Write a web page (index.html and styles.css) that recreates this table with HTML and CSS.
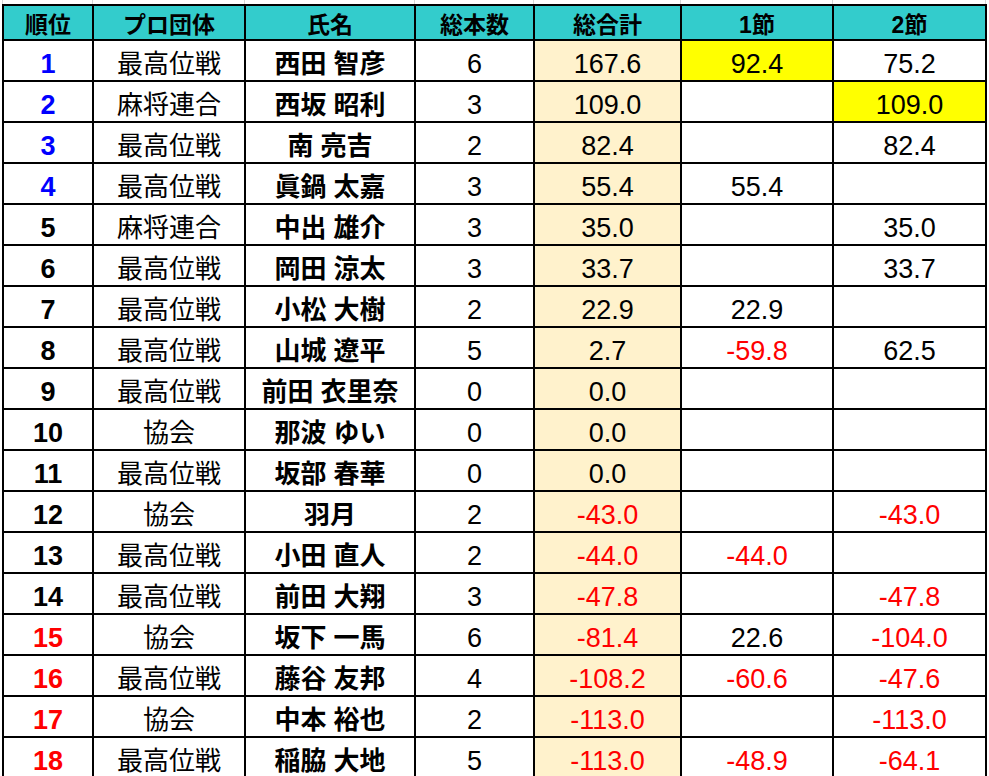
FILE: index.html
```html
<!DOCTYPE html>
<html lang="ja">
<head>
<meta charset="utf-8">
<title>成績表</title>
<link rel="stylesheet" href="styles.css">
</head>
<body>
<div class="grid-strip">
  <span class="gs gs-1"></span><span class="gs gs-2"></span><span class="gs gs-3"></span><span class="gs gs-4"></span><span class="gs gs-5"></span><span class="gs gs-6"></span><span class="gs gs-7"></span>
</div>
<table class="score">
  <thead>
    <tr>
      <th class="c1">順位</th><th class="c2">プロ団体</th><th class="c3">氏名</th><th class="c4">総本数</th><th class="c5">総合計</th><th class="c6">1節</th><th class="c7">2節</th>
    </tr>
  </thead>
  <tbody>
    <tr><td class="rank blue">1</td><td>最高位戦</td><td class="name">西田 智彦</td><td class="num">6</td><td class="num total">167.6</td><td class="num hl">92.4</td><td class="num">75.2</td></tr>
    <tr><td class="rank blue">2</td><td>麻将連合</td><td class="name">西坂 昭利</td><td class="num">3</td><td class="num total">109.0</td><td></td><td class="num hl">109.0</td></tr>
    <tr><td class="rank blue">3</td><td>最高位戦</td><td class="name">南 亮吉</td><td class="num">2</td><td class="num total">82.4</td><td></td><td class="num">82.4</td></tr>
    <tr><td class="rank blue">4</td><td>最高位戦</td><td class="name">眞鍋 太嘉</td><td class="num">3</td><td class="num total">55.4</td><td class="num">55.4</td><td></td></tr>
    <tr><td class="rank">5</td><td>麻将連合</td><td class="name">中出 雄介</td><td class="num">3</td><td class="num total">35.0</td><td></td><td class="num">35.0</td></tr>
    <tr><td class="rank">6</td><td>最高位戦</td><td class="name">岡田 涼太</td><td class="num">3</td><td class="num total">33.7</td><td></td><td class="num">33.7</td></tr>
    <tr><td class="rank">7</td><td>最高位戦</td><td class="name">小松 大樹</td><td class="num">2</td><td class="num total">22.9</td><td class="num">22.9</td><td></td></tr>
    <tr><td class="rank">8</td><td>最高位戦</td><td class="name">山城 遼平</td><td class="num">5</td><td class="num total">2.7</td><td class="num neg">-59.8</td><td class="num">62.5</td></tr>
    <tr><td class="rank">9</td><td>最高位戦</td><td class="name">前田 衣里奈</td><td class="num">0</td><td class="num total">0.0</td><td></td><td></td></tr>
    <tr><td class="rank">10</td><td>協会</td><td class="name">那波 ゆい</td><td class="num">0</td><td class="num total">0.0</td><td></td><td></td></tr>
    <tr><td class="rank">11</td><td>最高位戦</td><td class="name">坂部 春華</td><td class="num">0</td><td class="num total">0.0</td><td></td><td></td></tr>
    <tr><td class="rank">12</td><td>協会</td><td class="name">羽月</td><td class="num">2</td><td class="num total neg">-43.0</td><td></td><td class="num neg">-43.0</td></tr>
    <tr><td class="rank">13</td><td>最高位戦</td><td class="name">小田 直人</td><td class="num">2</td><td class="num total neg">-44.0</td><td class="num neg">-44.0</td><td></td></tr>
    <tr><td class="rank">14</td><td>最高位戦</td><td class="name">前田 大翔</td><td class="num">3</td><td class="num total neg">-47.8</td><td></td><td class="num neg">-47.8</td></tr>
    <tr><td class="rank red">15</td><td>協会</td><td class="name">坂下 一馬</td><td class="num">6</td><td class="num total neg">-81.4</td><td class="num">22.6</td><td class="num neg">-104.0</td></tr>
    <tr><td class="rank red">16</td><td>最高位戦</td><td class="name">藤谷 友邦</td><td class="num">4</td><td class="num total neg">-108.2</td><td class="num neg">-60.6</td><td class="num neg">-47.6</td></tr>
    <tr><td class="rank red">17</td><td>協会</td><td class="name">中本 裕也</td><td class="num">2</td><td class="num total neg">-113.0</td><td></td><td class="num neg">-113.0</td></tr>
    <tr><td class="rank red">18</td><td>最高位戦</td><td class="name">稲脇 大地</td><td class="num">5</td><td class="num total neg">-113.0</td><td class="num neg">-48.9</td><td class="num neg">-64.1</td></tr>
  </tbody>
</table>
</body>
</html>
```
FILE: styles.css
```css
html, body {
  margin: 0;
  padding: 0;
  background: #ffffff;
}
body {
  font-family: "Liberation Sans", "Noto Sans CJK JP", sans-serif;
  color: #000;
  overflow: hidden;
}
.grid-strip {
  display: flex;
  height: 4px;
  margin-left: 2px;
}
.gs {
  box-sizing: border-box;
  border-right: 1px solid #d6d6d6;
  height: 4px;
}
.gs-1 { width: 91px; border-left: 1px solid #d6d6d6; }
.gs-2 { width: 152px; }
.gs-3 { width: 170px; }
.gs-4 { width: 119px; }
.gs-5 { width: 147px; }
.gs-6 { width: 152px; }
.gs-7 { width: 153px; }

.score {
  margin-left: 2px;
  border-collapse: separate;
  border-spacing: 0;
  table-layout: fixed;
  width: 985px;
  border-top: 2px solid #000;
  border-left: 2px solid #000;
}
.score th, .score td {
  box-sizing: border-box;
  border-right: 2px solid #000;
  border-bottom: 2px solid #000;
  padding: 0;
  text-align: center;
  vertical-align: bottom;
  white-space: nowrap;
  overflow: hidden;
}
.score th {
  height: 35px;
  background: #33cccc;
  font-size: 23px;
  line-height: 27px;
  font-weight: bold;
}
.score td {
  height: 41px;
  font-size: 26px;
  line-height: 30px;
  padding-bottom: 1px;
}
.score td.num,
.score td.rank {
  font-size: 27px;
}
.c1 { width: 90px; }
.c2 { width: 152px; }
.c3 { width: 170px; }
.c4 { width: 119px; }
.c5 { width: 147px; }
.c6 { width: 152px; }
.c7 { width: 153px; }

.rank { font-weight: bold; }
.blue { color: #0000ff; }
.red { color: #ff0000; }
.name { font-weight: bold; }
.total { background: #fff2cc; }
.hl { background: #ffff00; }
.neg { color: #ff0000; }
```
